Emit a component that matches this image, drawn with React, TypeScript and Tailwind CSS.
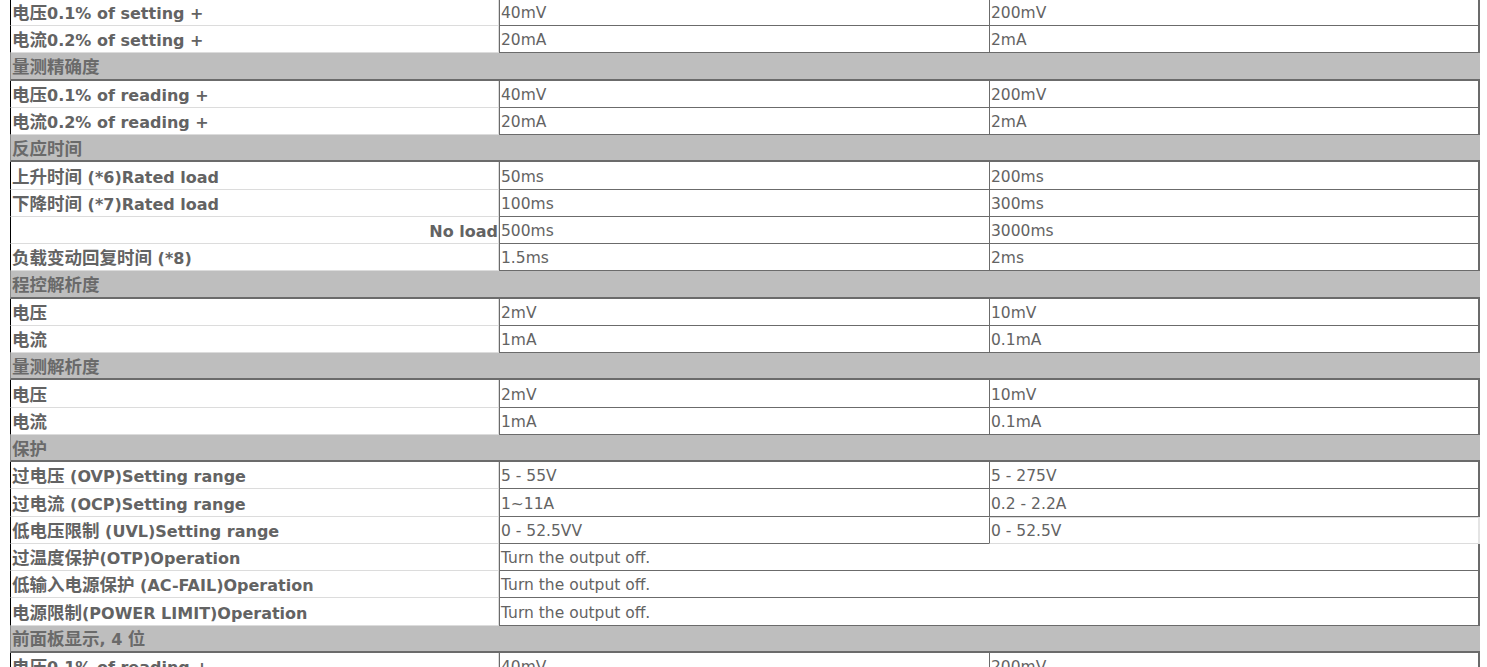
import React from "react";

type Row =
    | { kind: "head"; text: string }
    | { kind: "row"; label: string; a: string; b?: string; span?: boolean; alignRight?: boolean; lightLast?: boolean };

const rows: Row[] = [
    { kind: "row", label: "电压0.1% of setting +", a: "40mV", b: "200mV" },
    { kind: "row", label: "电流0.2% of setting +", a: "20mA", b: "2mA" },
    { kind: "head", text: "量测精确度" },
    { kind: "row", label: "电压0.1% of reading +", a: "40mV", b: "200mV" },
    { kind: "row", label: "电流0.2% of reading +", a: "20mA", b: "2mA" },
    { kind: "head", text: "反应时间" },
    { kind: "row", label: "上升时间 (*6)Rated load", a: "50ms", b: "200ms" },
    { kind: "row", label: "下降时间 (*7)Rated load", a: "100ms", b: "300ms" },
    { kind: "row", label: "No load", a: "500ms", b: "3000ms", alignRight: true },
    { kind: "row", label: "负载变动回复时间 (*8)", a: "1.5ms", b: "2ms" },
    { kind: "head", text: "程控解析度" },
    { kind: "row", label: "电压", a: "2mV", b: "10mV" },
    { kind: "row", label: "电流", a: "1mA", b: "0.1mA" },
    { kind: "head", text: "量测解析度" },
    { kind: "row", label: "电压", a: "2mV", b: "10mV" },
    { kind: "row", label: "电流", a: "1mA", b: "0.1mA" },
    { kind: "head", text: "保护" },
    { kind: "row", label: "过电压 (OVP)Setting range", a: "5 - 55V", b: "5 - 275V" },
    { kind: "row", label: "过电流 (OCP)Setting range", a: "1~11A", b: "0.2 - 2.2A" },
    { kind: "row", label: "低电压限制 (UVL)Setting range", a: "0 - 52.5VV", b: "0 - 52.5V", lightLast: true },
    { kind: "row", label: "过温度保护(OTP)Operation", a: "Turn the output off.", span: true },
    { kind: "row", label: "低输入电源保护 (AC-FAIL)Operation", a: "Turn the output off.", span: true },
    { kind: "row", label: "电源限制(POWER LIMIT)Operation", a: "Turn the output off.", span: true },
    { kind: "head", text: "前面板显示, 4 位" },
    { kind: "row", label: "电压0.1% of reading +", a: "40mV", b: "200mV" },
];

// CJK glyphs render a bit larger than the latin text in the original
function Mixed({ text }: { text: string }) {
    const parts = text.split(/([\u4e00-\u9fff]+)/).filter(Boolean);
    return (
        <span className="whitespace-pre">
            {parts.map((p, i) =>
                /[\u4e00-\u9fff]/.test(p) ? (
                    <span key={i} className="text-[17.5px]">{p}</span>
                ) : (
                    <span key={i}>{p}</span>
                )
            )}
        </span>
    );
}

export default function App() {
    return (
        <div
            className="w-[1487px] h-[667px] overflow-hidden bg-white text-[15.5px] text-[#636363]"
            style={{ fontFamily: '"DejaVu Sans", "Noto Sans CJK SC", sans-serif' }}
        >
            <div className="ml-[10px] w-[1470px] mt-[-1.25px] flex flex-col">
                {rows.map((row, i) =>
                    row.kind === "head" ? (
                        <div
                            key={i}
                            className="h-[27.25px] flex items-center pt-[4px] bg-[#bebebe] border-l border-[#8a8a8a] border-b-2 border-b-[#6b6b6b] pl-px font-bold text-[16px] text-[#6a6a6a] leading-none whitespace-nowrap"
                        >
                            <Mixed text={row.text} />
                        </div>
                    ) : (
                        <div key={i} className="h-[27.25px] flex leading-none">
                            {/* label column */}
                            <div
                                className={
                                    "w-[489px] shrink-0 flex items-center pt-[4px] border-l border-black border-b border-b-[#dcdcdc] border-r border-r-[#dcdcdc] font-bold text-[16px] whitespace-nowrap " +
                                    (row.alignRight ? "justify-end" : "pl-px")
                                }
                            >
                                <Mixed text={row.label} />
                            </div>
                            {row.span ? (
                                <div className="flex-1 flex items-center pt-[4px] border-l border-[#6b6b6b] border-b border-b-[#6b6b6b] border-r-2 border-r-[#6b6b6b] pl-px whitespace-nowrap">
                                    {row.a}
                                </div>
                            ) : (
                                <>
                                    <div className="w-[490px] shrink-0 flex items-center pt-[4px] border-l border-[#6b6b6b] border-b border-b-[#6b6b6b] pl-px whitespace-nowrap">
                                        {row.a}
                                    </div>
                                    <div
                                        className={
                                            "flex-1 flex items-center pt-[4px] pl-px whitespace-nowrap " +
                                            (row.lightLast
                                                ? "border-l border-l-[#6b6b6b] border-y border-y-[#dcdcdc] border-r-2 border-r-[#e4e4e4]"
                                                : "border-l border-[#6b6b6b] border-b border-b-[#6b6b6b] border-r-2 border-r-[#6b6b6b]")
                                        }
                                    >
                                        {row.b}
                                    </div>
                                </>
                            )}
                        </div>
                    )
                )}
            </div>
        </div>
    );
}
